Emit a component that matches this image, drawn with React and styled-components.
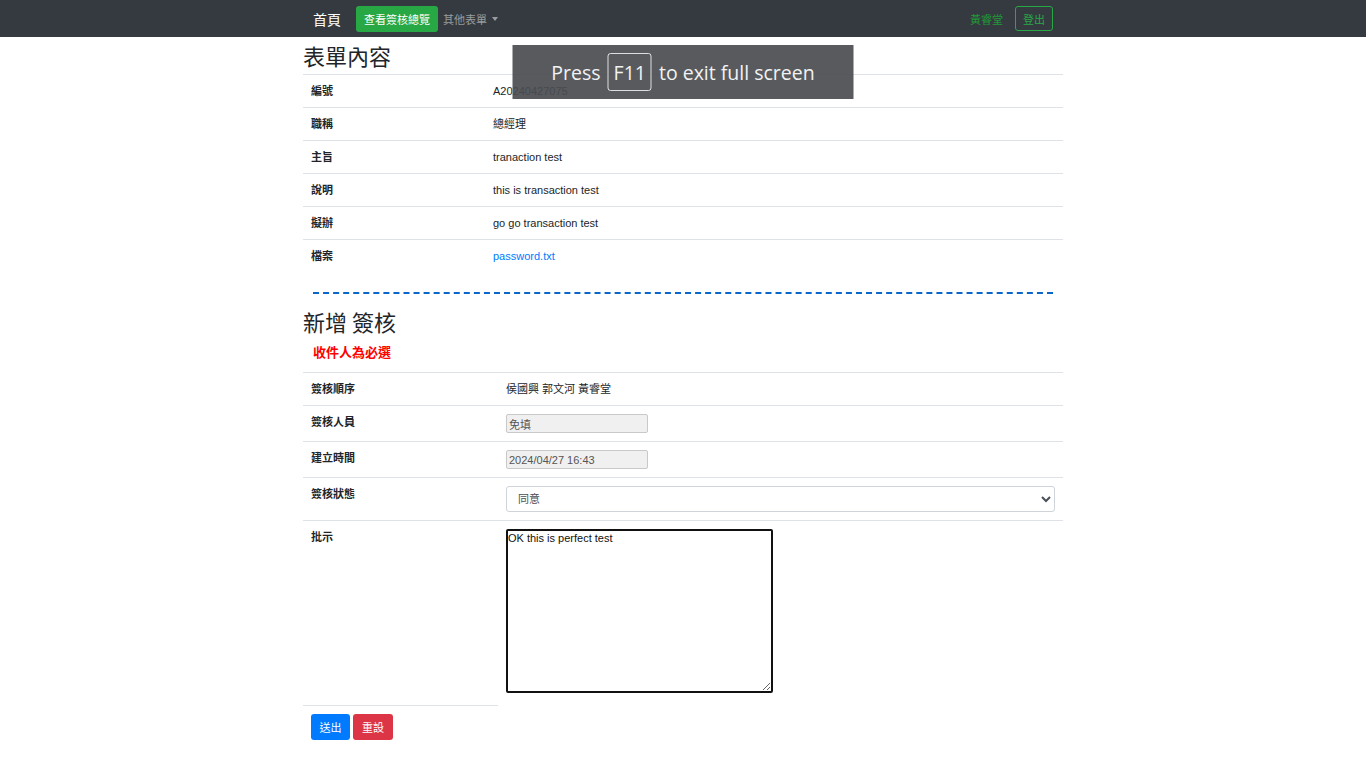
import React from "react";
import styled, { createGlobalStyle } from "styled-components";

const Global = createGlobalStyle`
  html, body { margin: 0; padding: 0; background: #fff; }
  body {
    font-family: "Liberation Sans", "Noto Sans CJK TC", Arial, sans-serif;
    color: #212529;
    font-size: 11px;
  }
  * { box-sizing: border-box; }
`;

const Navbar = styled.nav`
  height: 37px;
  background: #343a40;
`;

const NavInner = styled.div`
  width: 760px;
  height: 100%;
  margin: 0 auto;
  padding: 0 10px;
  display: flex;
  align-items: center;
`;

const Brand = styled.a`
  font-family: "Noto Sans CJK TC", sans-serif;
  font-size: 14px;
  color: #fff;
  margin-right: 15px;
  text-decoration: none;
  line-height: 20px;
`;

const NavButton = styled.a`
  display: inline-flex;
  align-items: center;
  height: 26px;
  padding: 0 8px;
  background: #28a745;
  color: #fff;
  border-radius: 3px;
  font-size: 11px;
  text-decoration: none;
  margin-right: 5px;
`;

const Dropdown = styled.a`
  color: rgba(255, 255, 255, 0.5);
  font-size: 11px;
  display: inline-flex;
  align-items: center;
  text-decoration: none;
  &::after {
    content: "";
    margin-left: 5px;
    border-top: 4px solid rgba(255, 255, 255, 0.5);
    border-left: 3px solid transparent;
    border-right: 3px solid transparent;
  }
`;

const Spacer = styled.div`
  flex: 1;
`;

const UserName = styled.span`
  color: #1f9a35;
  font-size: 11px;
  margin-right: 12px;
`;

const OutlineButton = styled.a`
  display: inline-flex;
  align-items: center;
  height: 25px;
  padding: 0 7px;
  border: 1px solid #28a745;
  color: #28a745;
  border-radius: 3px;
  font-size: 11px;
  text-decoration: none;
`;

const Container = styled.main`
  width: 760px;
  margin: 0 auto;
`;

const Heading = styled.h2`
  font-family: "Noto Sans CJK TC", sans-serif;
  font-weight: 400;
  font-size: 22px;
  line-height: 30px;
  margin: ${(p) => p.$mt || 3}px 0 ${(p) => p.$mb || 4}px;
  color: #212529;
`;

const Table = styled.table`
  width: 100%;
  border-collapse: collapse;
`;

const LabelCell = styled.td`
  width: ${(p) => p.$w}px;
  border-top: 1px solid #dee2e6;
  padding: 8px;
  font-weight: 700;
  font-size: 11px;
  line-height: 16px;
  vertical-align: top;
`;

const ValueCell = styled.td`
  border-top: 1px solid #dee2e6;
  padding: 8px 8px ${(p) => p.$pb || 8}px;
  font-size: 11px;
  line-height: 16px;
  vertical-align: top;
`;

const PlainCell = styled.td`
  padding: 8px;
  vertical-align: top;
`;

const Link = styled.a`
  color: #007bff;
  text-decoration: none;
`;

const Divider = styled.hr`
  margin: 20px 10px 0;
  border: 0;
  border-top: 2px dashed #0a66c8;
  height: 0;
`;

const Required = styled.div`
  color: #ff0000;
  font-weight: 700;
  font-size: 13px;
  line-height: 16px;
  padding: 5px 10px 11px;
`;

const ReadInput = styled.input`
  display: block;
  width: 142px;
  height: 19px;
  border: 1px solid #c9c9c9;
  border-radius: 2px;
  background: #f0f0f0;
  color: #555;
  font-family: "Liberation Sans", "Noto Sans CJK TC", sans-serif;
  font-size: 11px;
  padding: 0 2px;
  margin: 0;
`;

const Select = styled.select`
  display: block;
  width: 100%;
  height: 26px;
  border: 1px solid #ced4da;
  border-radius: 3px;
  background: #fff;
  color: #495057;
  font-family: "Liberation Sans", "Noto Sans CJK TC", sans-serif;
  font-size: 11px;
  padding: 0 7px;
  margin: 0;
`;

const TextArea = styled.textarea`
  display: block;
  width: 267px;
  height: 164px;
  border: 2px solid #111;
  border-radius: 2px;
  font-family: "Liberation Sans", Arial, sans-serif;
  font-size: 11px;
  line-height: 13px;
  padding: 1px 0;
  margin: 0;
  color: #111;
  resize: both;
  outline: none;
`;

const ButtonRow = styled.td`
  border-top: 1px solid #dee2e6;
  padding: 8px;
  display: flex;
  gap: 3px;
`;

const ActionButton = styled.button`
  height: 26px;
  padding: 0 ${(p) => (p.$danger ? 9 : 8.5)}px;
  border: 0;
  border-radius: 3px;
  background: ${(p) => (p.$danger ? "#dc3545" : "#007bff")};
  color: #fff;
  font-family: "Liberation Sans", "Noto Sans CJK TC", sans-serif;
  font-size: 11px;
  cursor: pointer;
`;

const Overlay = styled.div`
  position: absolute;
  top: 45px;
  left: 50%;
  transform: translateX(-50%);
  width: 341px;
  height: 54px;
  background: rgba(74, 76, 80, 0.92);
  color: #f2f2f2;
  font-family: "Open Sans", "DejaVu Sans", sans-serif;
  font-size: 19.5px;
  display: flex;
  align-items: center;
  justify-content: center;
  gap: 7px;
`;

const Key = styled.span`
  border: 1px solid rgba(255, 255, 255, 0.8);
  border-radius: 3px;
  height: 38px;
  padding: 0 5px;
  display: inline-flex;
  align-items: center;
`;

const info = [
  ["編號", "A20240427075"],
  ["職稱", "總經理"],
  ["主旨", "tranaction test"],
  ["說明", "this is transaction test"],
  ["擬辦", "go go transaction test"],
];

export default function App() {
  return (
    <>
      <Global />
      <Navbar>
        <NavInner>
          <Brand href="#">首頁</Brand>
          <NavButton href="#">查看簽核總覽</NavButton>
          <Dropdown href="#">其他表單</Dropdown>
          <Spacer />
          <UserName>黃睿堂</UserName>
          <OutlineButton href="#">登出</OutlineButton>
        </NavInner>
      </Navbar>
      <Container>
        <Heading>表單內容</Heading>
        <Table>
          <tbody>
            {info.map(([k, v]) => (
              <tr key={k}>
                <LabelCell $w={182}>{k}</LabelCell>
                <ValueCell>{v}</ValueCell>
              </tr>
            ))}
            <tr>
              <LabelCell $w={182}>檔案</LabelCell>
              <ValueCell>
                <Link href="#">password.txt</Link>
              </ValueCell>
            </tr>
          </tbody>
        </Table>
        <Divider />
        <Heading $mt={12} $mb={0}>新增 簽核</Heading>
        <Required>收件人為必選</Required>
        <Table>
          <tbody>
            <tr>
              <LabelCell $w={195}>簽核順序</LabelCell>
              <ValueCell>侯國興 郭文河 黃睿堂</ValueCell>
            </tr>
            <tr>
              <LabelCell $w={195}>簽核人員</LabelCell>
              <ValueCell>
                <ReadInput readOnly value="免填" />
              </ValueCell>
            </tr>
            <tr>
              <LabelCell $w={195}>建立時間</LabelCell>
              <ValueCell>
                <ReadInput readOnly value="2024/04/27 16:43" />
              </ValueCell>
            </tr>
            <tr>
              <LabelCell $w={195}>簽核狀態</LabelCell>
              <ValueCell>
                <Select defaultValue="同意">
                  <option>同意</option>
                  <option>不同意</option>
                </Select>
              </ValueCell>
            </tr>
            <tr>
              <LabelCell $w={195}>批示</LabelCell>
              <ValueCell $pb={12}>
                <TextArea defaultValue="OK this is perfect test" />
              </ValueCell>
            </tr>
            <tr>
              <ButtonRow>
                <ActionButton>送出</ActionButton>
                <ActionButton $danger>重設</ActionButton>
              </ButtonRow>
              <PlainCell />
            </tr>
          </tbody>
        </Table>
      </Container>
      <Overlay>
        <span>Press</span>
        <Key>F11</Key>
        <span>to exit full screen</span>
      </Overlay>
    </>
  );
}
